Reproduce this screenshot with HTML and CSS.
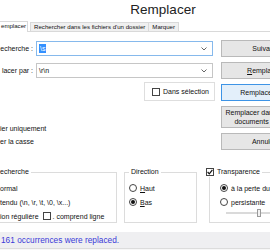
FILE: index.html
```html
<!DOCTYPE html>
<html lang="fr">
<head>
  <meta charset="UTF-8" />
  <title>Remplacer</title>
  <link rel="stylesheet" href="styles.css">
</head>
<body>
  <div class="window">
    <div class="titlebar">Remplacer</div>

    <!-- onglets -->
    <div class="tabs">
      <div class="tab active">emplacer</div>
      <div class="tab">Rechercher dans les fichiers d'un dossier</div>
      <div class="tab">Marquer</div>
    </div>

    <div class="top">
      <div class="left">
        <div class="field">
          <label class="field-label">echerche :</label>
          <div class="combo focus">
            <span class="sel">\s</span>
            <svg class="arrow" width="6" height="4" viewBox="0 0 6 4"><path d="M0.5 0.5 L3 3 L5.5 0.5" fill="none" stroke="#555" stroke-width="0.9"/></svg>
          </div>
        </div>
        <div class="field">
          <label class="field-label">lacer par :</label>
          <div class="combo">
            <span>\r\n</span>
            <svg class="arrow" width="6" height="4" viewBox="0 0 6 4"><path d="M0.5 0.5 L3 3 L5.5 0.5" fill="none" stroke="#555" stroke-width="0.9"/></svg>
          </div>
        </div>
        <div class="sel-box">
          <span class="check"></span>
          <span>Dans sélection</span>
        </div>
        <div class="opts">
          <div class="opt">ier uniquement</div>
          <div class="opt">er la casse</div>
        </div>
      </div>

      <!-- boutons de droite -->
      <div class="buttons">
        <button class="btn">Suivant</button>
        <button class="btn"><u>R</u>emplacer</button>
        <button class="btn default">Remplacer tout</button>
        <button class="btn tall">Remplacer dans tous les<br>documents ouverts</button>
        <button class="btn">Annuler</button>
      </div>
    </div>

    <div class="groups">
      <fieldset class="group mode">
        <legend>echerche</legend>
        <div class="row">ormal</div>
        <div class="row">tendu (\n, \r, \t, \0, \x...)</div>
        <div class="row">ion régulière <span class="check"></span> <span>. comprend ligne</span></div>
      </fieldset>

      <fieldset class="group direction">
        <legend>Direction</legend>
        <div class="row"><span class="radio"></span><span><u>H</u>aut</span></div>
        <div class="row"><span class="radio on"></span><span><u>B</u>as</span></div>
      </fieldset>

      <fieldset class="group transp">
        <legend>
          <span class="check on">
            <svg width="6" height="6" viewBox="0 0 6 6"><path d="M0.6 3 L2.3 4.8 L5.4 0.8" fill="none" stroke="#111" stroke-width="1.2"/></svg>
          </span>
          <span>Transparence</span>
        </legend>
        <div class="row"><span class="radio on"></span><span>à la perte du focus</span></div>
        <div class="row"><span class="radio"></span><span>persistante</span></div>
        <div class="slider"><span class="thumb"></span></div>
      </fieldset>
    </div>

    <div class="status">161 occurrences were replaced.</div>
  </div>
</body>
</html>
```

FILE: styles.css
```css
* {
  box-sizing: border-box;
}

body {
  margin: 0;
  font-family: "Liberation Sans", Arial, sans-serif;
  font-size: 7px;
  color: #111;
  background: #fff;
}

.window {
  width: 270px;
  height: 250px;
  overflow: hidden;
  background: #f7f7f7;
}

.titlebar {
  height: 21px;
  line-height: 20px;
  padding-left: 56px;
  text-align: center;
  font-size: 13.5px;
  color: #222;
  background: #fff;
}

/* onglets */
.tabs {
  display: flex;
  align-items: flex-end;
  height: 11px;
  border-bottom: 1px solid #d9d9d9;
  background: #fff;
}

.tab {
  height: 9px;
  line-height: 8px;
  padding: 0 3px;
  margin-left: -1px;
  font-size: 6.1px;
  white-space: nowrap;
  border: 1px solid #d9d9d9;
  border-bottom: none;
  background: #f0f0f0;
}

.tab.active {
  height: 11px;
  margin: 0 2px -1px 0;
  padding: 0 1px 0 1px;
  border-left: none;
  background: #fff;
}

.tab.active + .tab {
  margin-left: 0;
}

/* zone du haut */
.top {
  display: flex;
  padding-top: 8px;
  background: #fff;
}

.left {
  width: 215px;
  flex-shrink: 0;
}

.field {
  display: flex;
  align-items: center;
  height: 17px;
}

.field + .field {
  margin-top: 5px;
}

.field-label {
  width: 33px;
  text-align: right;
  white-space: nowrap;
}

.combo {
  display: flex;
  align-items: center;
  width: 177px;
  height: 15px;
  margin-left: 3px;
  padding-left: 2px;
  border: 1px solid #c6c6c6;
  background: #fff;
}

.combo.focus {
  border-color: #86b9ec;
}

.sel {
  padding: 0 1px;
  line-height: 9px;
  color: #fff;
  background: #3390ff;
}

.arrow {
  margin-left: auto;
  margin-right: 5px;
}

.sel-box {
  display: flex;
  align-items: center;
  gap: 3px;
  width: 71px;
  height: 19px;
  margin: 3px 0 0 144px;
  padding-left: 7px;
  border: 1px solid #dedede;
}

.opts {
  margin-top: 21px;
}

.opt {
  height: 13px;
  line-height: 13px;
  white-space: nowrap;
}

/* boutons */
.buttons {
  display: flex;
  flex-direction: column;
  gap: 5px;
  flex-shrink: 0;
  width: 86px;
  margin-left: 6px;
}

.btn {
  height: 17px;
  padding: 0;
  font-family: inherit;
  font-size: 7px;
  line-height: 9px;
  color: #111;
  border: 1px solid #b9b9b9;
  background: #e6e6e6;
}

.btn.default {
  border-color: #3d94e6;
  background: #e3effa;
}

.btn.tall {
  height: 22px;
}

/* cases et boutons radio */
.check {
  display: inline-flex;
  align-items: center;
  justify-content: center;
  flex-shrink: 0;
  width: 8px;
  height: 8px;
  border: 1px solid #444;
  background: #fff;
  vertical-align: middle;
}

.radio {
  display: inline-flex;
  align-items: center;
  justify-content: center;
  flex-shrink: 0;
  width: 8px;
  height: 8px;
  border: 1px solid #444;
  border-radius: 50%;
  background: #fff;
}

.radio.on::after {
  content: "";
  width: 4px;
  height: 4px;
  border-radius: 50%;
  background: #111;
}

/* groupes du bas */
.groups {
  display: flex;
  padding-top: 17px;
  background: #fff;
}

.group {
  flex-shrink: 0;
  height: 56px;
  margin: 0;
  padding: 4px 0 0 0;
  min-width: 0;
  border: 1px solid #dcdcdc;
}

.group legend {
  display: flex;
  align-items: center;
  gap: 3px;
  padding: 0 2px 0 0;
  line-height: 10px;
  white-space: nowrap;
}

.row {
  display: flex;
  align-items: center;
  gap: 3px;
  height: 14px;
  white-space: nowrap;
}

.mode {
  width: 118px;
  margin-left: -1px;
}

.mode .row {
  gap: 0;
}

.mode .check {
  margin: 0 2px 0 4px;
}

.direction {
  width: 73px;
  margin-left: 7px;
  padding-left: 4px;
}

.direction legend {
  padding-left: 2px;
}

.transp {
  width: 70px;
  margin-left: 12px;
  padding-left: 10px;
}

.transp legend {
  margin-left: -14px;
}

.slider {
  position: relative;
  width: 60px;
  height: 2px;
  margin: 3px 0 0 6px;
  background: #dadada;
}

.thumb {
  position: absolute;
  left: 31px;
  top: -3px;
  width: 4px;
  height: 8px;
  border: 1px solid #9a9a9a;
  background: #f2f2f2;
}

/* barre d'etat */
.status {
  height: 16px;
  margin-top: 0;
  border-top: 9px solid #fff;
  box-sizing: content-box;
  padding-left: 1px;
  line-height: 16px;
  font-size: 8.3px;
  color: #3a3ad8;
  background: #efeff1;
  border-bottom: 1px solid #dcdcdc;
}
```
